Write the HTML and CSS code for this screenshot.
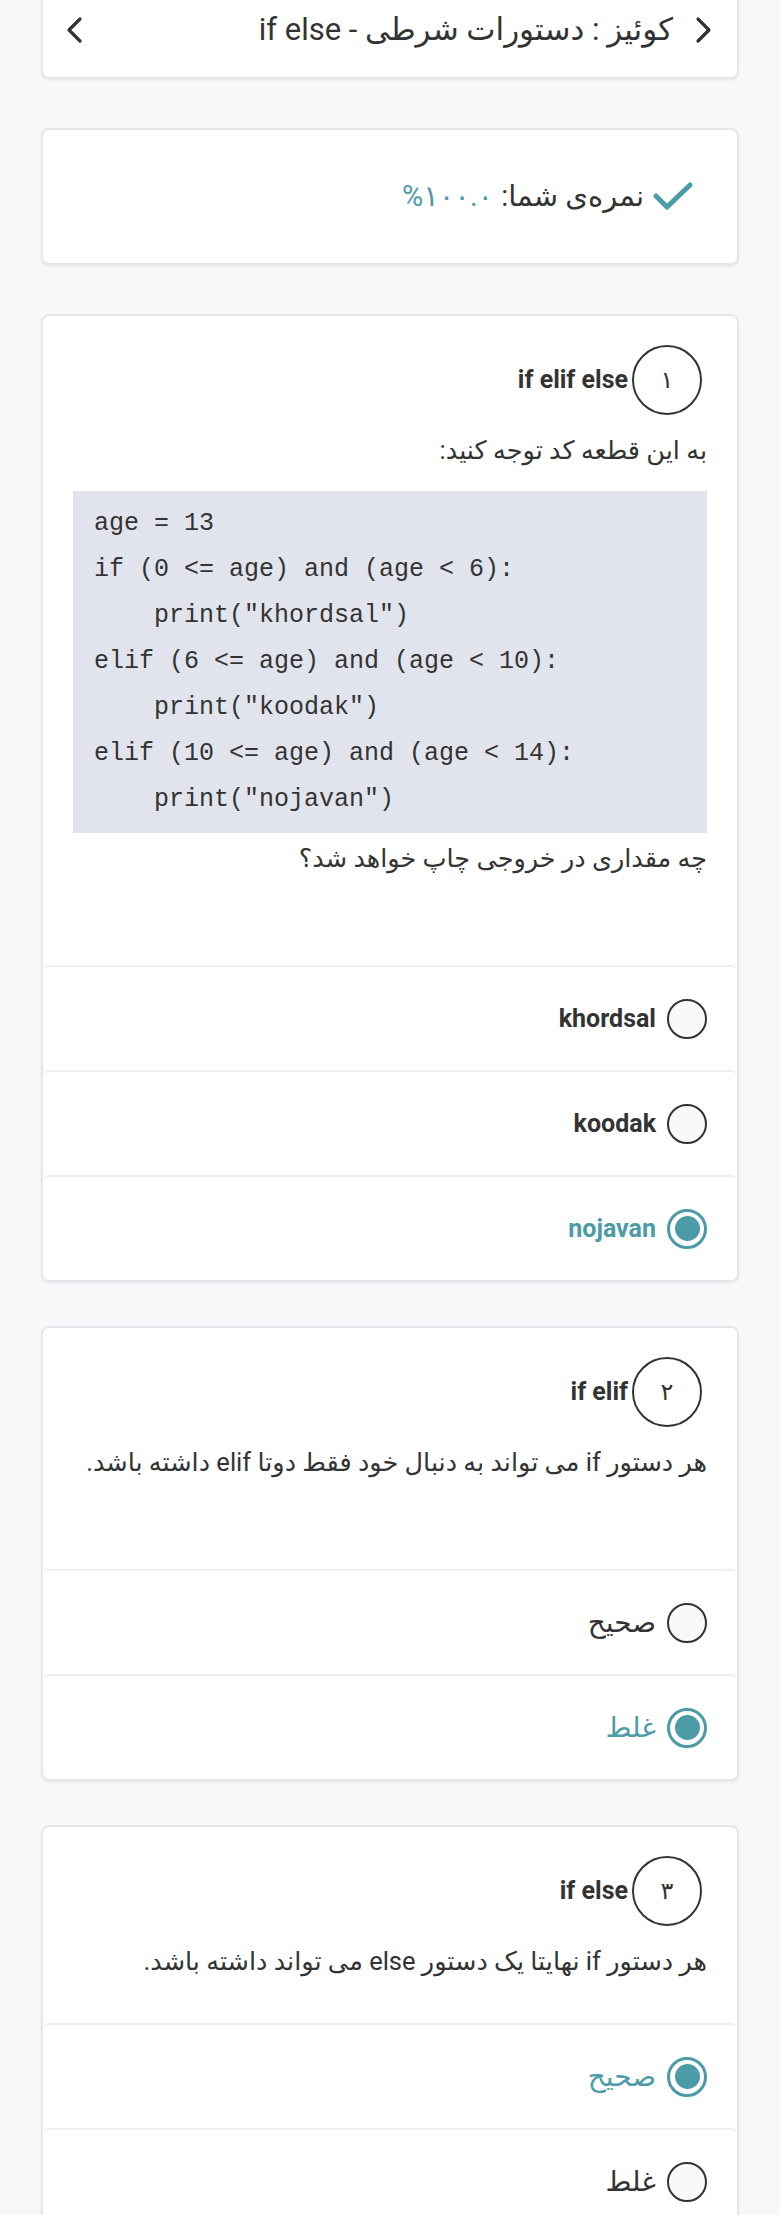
FILE: index.html
```html
<!DOCTYPE html>
<html lang="fa" dir="rtl">
<head>
<meta charset="utf-8">
<title>کوئیز : دستورات شرطی - if else</title>
<link rel="stylesheet" href="styles.css">
</head>
<body>
<div class="page">
  <header class="card topbar">
    <span class="chev">
      <svg width="20" height="30" viewBox="0 0 20 30"><path d="M5 4 L16 15 L5 26" fill="none" stroke="#333" stroke-width="3.2" stroke-linecap="round" stroke-linejoin="round"/></svg>
    </span>
    <h1 class="title">کوئیز : دستورات شرطی - if else</h1>
    <span class="chev chev-back">
      <svg width="20" height="30" viewBox="0 0 20 30"><path d="M15 4 L4 15 L15 26" fill="none" stroke="#333" stroke-width="3.2" stroke-linecap="round" stroke-linejoin="round"/></svg>
    </span>
  </header>

  <section class="card score">
    <svg class="check" width="42" height="30" viewBox="0 0 42 30"><path d="M4 15 L15 26 L38 4" fill="none" stroke="#4b9ca6" stroke-width="5" stroke-linecap="round" stroke-linejoin="round"/></svg>
    <span class="score-label">نمره‌ی شما:</span>
    <span class="score-value" dir="ltr">%۱۰۰.۰</span>
  </section>

  <section class="card question">
    <div class="q-body q-body--spaced">
      <div class="q-head">
        <span class="q-num">۱</span>
        <span class="q-title">if elif else</span>
      </div>
      <p class="q-text">به این قطعه کد توجه کنید:</p>
      <pre class="code">age = 13
if (0 &lt;= age) and (age &lt; 6):
    print("khordsal")
elif (6 &lt;= age) and (age &lt; 10):
    print("koodak")
elif (10 &lt;= age) and (age &lt; 14):
    print("nojavan")</pre>
      <p class="q-text q-text--after">چه مقداری در خروجی چاپ خواهد شد؟</p>
    </div>
    <div class="opt"><span class="radio"></span><span class="opt-label">khordsal</span></div>
    <div class="opt"><span class="radio"></span><span class="opt-label">koodak</span></div>
    <div class="opt opt--checked"><span class="radio"><span class="radio-dot"></span></span><span class="opt-label">nojavan</span></div>
  </section>

  <section class="card question">
    <div class="q-body q-body--spaced">
      <div class="q-head">
        <span class="q-num">۲</span>
        <span class="q-title">if elif</span>
      </div>
      <p class="q-text">هر دستور if می تواند به دنبال خود فقط دوتا elif داشته باشد.</p>
    </div>
    <div class="opt"><span class="radio"></span><span class="opt-label opt-label--fa">صحیح</span></div>
    <div class="opt opt--checked"><span class="radio"><span class="radio-dot"></span></span><span class="opt-label opt-label--fa">غلط</span></div>
  </section>

  <section class="card question">
    <div class="q-body">
      <div class="q-head">
        <span class="q-num">۳</span>
        <span class="q-title">if else</span>
      </div>
      <p class="q-text">هر دستور if نهایتا یک دستور else می تواند داشته باشد.</p>
    </div>
    <div class="opt opt--checked"><span class="radio"><span class="radio-dot"></span></span><span class="opt-label opt-label--fa">صحیح</span></div>
    <div class="opt"><span class="radio"></span><span class="opt-label opt-label--fa">غلط</span></div>
  </section>
</div>
</body>
</html>
```

FILE: styles.css
```css
html {
  direction: rtl;
}

body {
  margin: 0;
  background: #f7f8fa;
  font-family: Roboto, "DejaVu Sans", sans-serif;
  color: #333;
}

.page {
  padding: 0 41px 40px;
}

.card {
  background: #fff;
  border: 2px solid #e5e6eb;
  border-radius: 8px;
  box-shadow: 0 2px 2px rgba(0, 0, 0, 0.05);
}

/* top bar */
.topbar {
  display: flex;
  align-items: center;
  margin-top: -24px;
  padding: 32px 24px 27px 22px;
}

.chev {
  display: flex;
  width: 20px;
  height: 30px;
}

.chev-back {
  margin-right: auto;
}

.title {
  margin: 0 20px 0 0;
  font-size: 31px;
  font-weight: 400;
  line-height: 40px;
}

/* score */
.score {
  display: flex;
  align-items: center;
  gap: 8px;
  margin-top: 49px;
  padding: 46px 43px 47px;
  font-size: 29px;
  line-height: 40px;
}

.score-value {
  color: #4b9ca6;
}

/* questions */
.question {
  margin-top: 44px;
  overflow: hidden;
}

.score + .question {
  margin-top: 49px;
}

.q-body {
  padding: 29px 30px 44px;
}

.q-body--spaced {
  padding-bottom: 89px;
}

.q-head {
  display: flex;
  align-items: center;
  gap: 4px;
  padding-right: 5px;
}

.q-num {
  width: 66px;
  height: 66px;
  border: 2px solid #333;
  border-radius: 50%;
  display: flex;
  align-items: center;
  justify-content: center;
  font-size: 24px;
}

.q-title {
  font-size: 25px;
  font-weight: 700;
  line-height: 40px;
}

.q-text {
  margin: 17px 0 0;
  font-size: 25.5px;
  line-height: 36px;
}

.q-text--after {
  margin-top: 7px;
}

.code {
  direction: ltr;
  text-align: left;
  margin: 23px 0 0;
  padding: 10px 21px;
  background: #e1e4ec;
  font-family: "Liberation Mono", monospace;
  font-size: 25px;
  line-height: 46px;
  color: #333;
}

/* options */
.opt {
  display: flex;
  align-items: center;
  gap: 11px;
  height: 103px;
  padding: 0 30px;
  border-top: 2px solid #eeeff3;
  border-radius: 6px 6px 0 0;
}

.radio {
  box-sizing: border-box;
  width: 40px;
  height: 40px;
  border: 2px solid #333;
  border-radius: 50%;
  background: #f9f9fb;
  display: flex;
  align-items: center;
  justify-content: center;
}

.opt--checked .radio {
  border: 3px solid #4b9ca6;
  background: #fff;
}

.radio-dot {
  width: 25px;
  height: 25px;
  border-radius: 50%;
  background: #4b9ca6;
}

.opt-label {
  font-size: 25px;
  font-weight: 700;
}

.opt-label--fa {
  font-weight: 400;
  font-size: 28px;
}

.opt--checked .opt-label {
  color: #4b9ca6;
}
```
